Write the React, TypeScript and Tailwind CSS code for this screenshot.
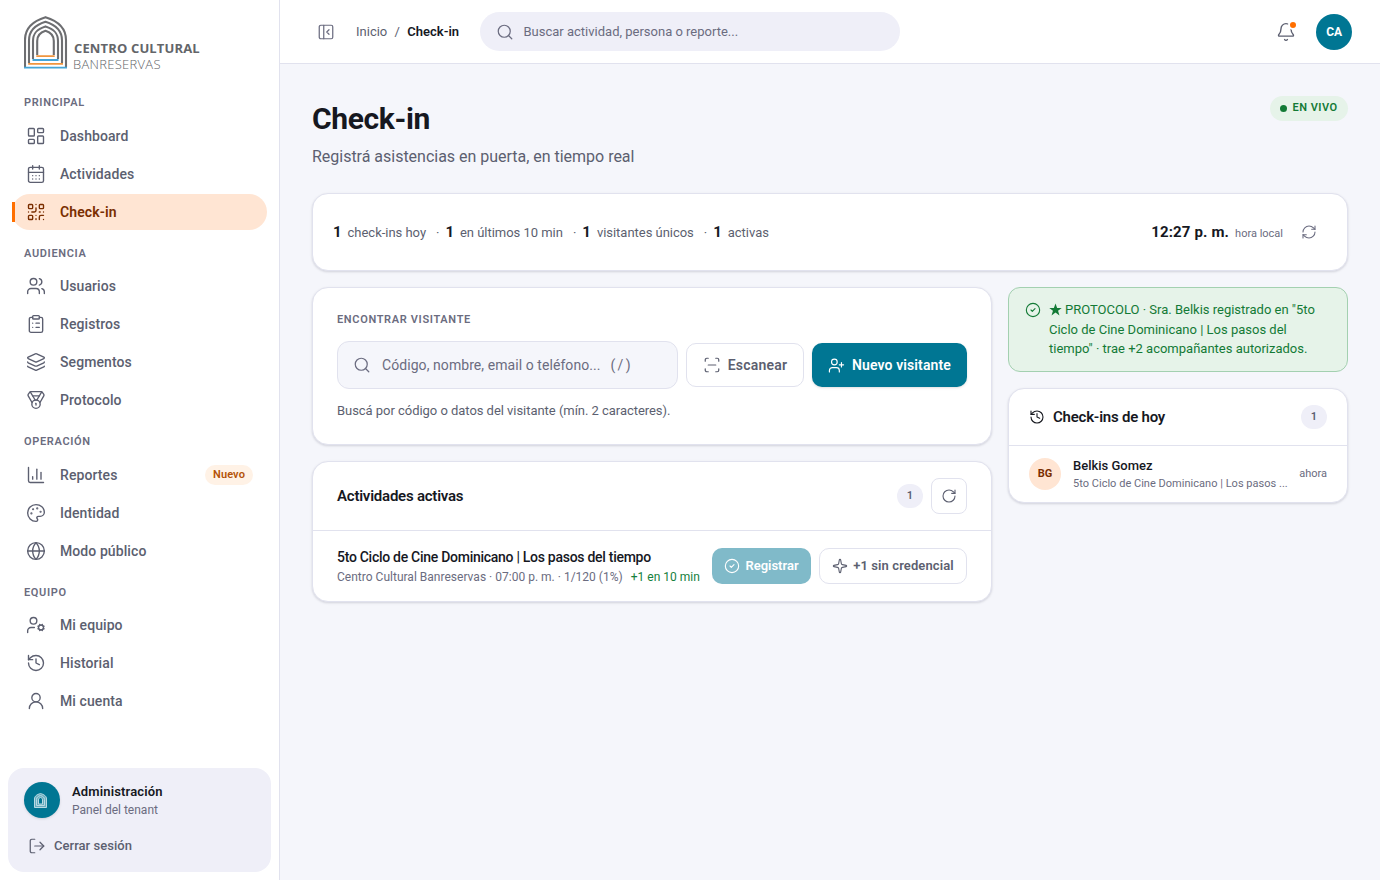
import type { ReactNode } from 'react';
import {
  Bell,
  CalendarDays,
  ChartColumn,
  CircleCheck,
  ClipboardList,
  Globe,
  History,
  Layers,
  LayoutDashboard,
  LogOut,
  Medal,
  Palette,
  PanelLeftClose,
  QrCode,
  RefreshCw,
  RotateCw,
  ScanLine,
  Search,
  Sparkle,
  UserCog,
  UserPlus,
  UserRound,
  Users,
  type LucideIcon,
} from 'lucide-react';

type NavItem = { label: string; icon: LucideIcon; active?: boolean; badge?: string };

const NAV: { title: string; items: NavItem[] }[] = [
  {
    title: 'Principal',
    items: [
      { label: 'Dashboard', icon: LayoutDashboard },
      { label: 'Actividades', icon: CalendarDays },
      { label: 'Check-in', icon: QrCode, active: true },
    ],
  },
  {
    title: 'Audiencia',
    items: [
      { label: 'Usuarios', icon: Users },
      { label: 'Registros', icon: ClipboardList },
      { label: 'Segmentos', icon: Layers },
      { label: 'Protocolo', icon: Medal },
    ],
  },
  {
    title: 'Operación',
    items: [
      { label: 'Reportes', icon: ChartColumn, badge: 'Nuevo' },
      { label: 'Identidad', icon: Palette },
      { label: 'Modo público', icon: Globe },
    ],
  },
  {
    title: 'Equipo',
    items: [
      { label: 'Mi equipo', icon: UserCog },
      { label: 'Historial', icon: History },
      { label: 'Mi cuenta', icon: UserRound },
    ],
  },
];

const STATS = ['check-ins hoy', 'en últimos 10 min', 'visitantes únicos', 'activas'];

function Logo() {
  return (
    <div className="flex h-[54px] items-start">
      <svg width="44" height="54" viewBox="0 0 44 54" fill="none" stroke="#6d6e71" strokeWidth="2.1">
        <path d="M1 51V24C1 12 9 5 21.500 1.200C34 5 42 12 42 24V51" />
        <path d="M5 47V24.500C5 14.500 11 9 21.500 5.800C32 9 38 14.500 38 24.500V47" />
        <path d="M9 43V25C9 17 13 13 21.500 10.400C30 13 34 17 34 25V43" />
        <path d="M13.200 39V25C13.200 19 16 16.500 21.500 14.800C27 16.500 29.800 19 29.800 25V39" />
        <path d="M0 51.600H43M8.500 44H34.500" stroke="#45a5d8" strokeWidth="1.8" />
        <path d="M4.200 47.800H39M12.300 40.200H30.700" stroke="#f0953f" strokeWidth="1.8" />
      </svg>
      <div className="ml-[6px] mt-[25px] font-['Open_Sans',sans-serif] text-[#636569]">
        <p className="text-[13px] leading-[15px] font-bold tracking-[0.011em] whitespace-nowrap">CENTRO CULTURAL</p>
        <p className="-ml-px text-[13px] leading-[16px] font-light tracking-[0.022em] whitespace-nowrap">BANRESERVAS</p>
      </div>
    </div>
  );
}

function NavLink({ label, icon: Icon, active, badge }: NavItem) {
  return (
    <a
      className={
        active
          ? 'relative flex h-9 items-center gap-3.5 rounded-full bg-[#ffe5d3] pl-3.5 pr-3.5 text-[#7a2e00]'
          : 'relative flex h-9 items-center gap-3.5 rounded-full pl-3.5 pr-3.5 text-[#5c5f70]'
      }
    >
      {active && <span className="absolute left-0 top-2 h-5 w-[3px] bg-[#ff6f00]" />}
      <Icon size={20} strokeWidth={1.65} />
      <span className={active ? 'text-sm font-semibold tracking-[0.008em]' : 'text-sm font-medium tracking-[0.006em]'}>
        {label}
      </span>
      {badge && (
        <span className="ml-auto flex h-5 w-12 items-center justify-center rounded-full bg-[#fff2e6] text-[11px] font-semibold tracking-[0.010em] text-[#b45309]">
          {badge}
        </span>
      )}
    </a>
  );
}

function Sidebar() {
  return (
    <aside className="flex w-[280px] shrink-0 flex-col border-r border-[#e1e2ee] bg-white">
      <div className="px-6 pt-4">
        <Logo />
      </div>
      <nav className="flex flex-col px-3 pt-[9.600px]">
        {NAV.map((group) => (
          <div key={group.title}>
            <p className="h-[38.400px] px-3 pt-[15.800px] text-[11px] leading-4 font-semibold tracking-[0.060em] text-[#6b6c80] uppercase">
              {group.title}
            </p>
            <div className="flex flex-col gap-0.5">
              {group.items.map((item) => (
                <NavLink key={item.label} {...item} />
              ))}
            </div>
          </div>
        ))}
      </nav>
      <div className="mx-2 mt-auto mb-2 h-[104px] rounded-2xl bg-[#efeff8] px-4 pt-3.5">
        <div className="flex h-9 items-center gap-3">
          <div className="flex size-9 items-center justify-center rounded-full bg-[#007693] pr-[3px] shadow-sm">
            <svg width="13" height="15" viewBox="0 0 13 15" fill="none" stroke="#b9dbe4" strokeWidth="1">
              <path d="M.5 14.500V6C.5 3 3 1.500 6.500.5C10 1.500 12.500 3 12.500 6V14.500Z" fill="#67acbe" />
              <path d="M2.500 12.500V6.500C2.500 4.300 4 3.200 6.500 2.500C9 3.200 10.500 4.300 10.500 6.500V12.500Z" />
              <path d="M4.500 11V7C4.500 5.500 5 5 6.500 4.500C8 5 8.500 5.500 8.500 7V11Z" fill="#007693" />
            </svg>
          </div>
          <div>
            <p className="text-[13px] leading-[19px] font-semibold tracking-[0.012em] text-[#16181f]">Administración</p>
            <p className="text-xs leading-[18px] text-[#6b6c80]">Panel del tenant</p>
          </div>
        </div>
        <div className="mt-[18px] flex items-center gap-2 pl-1 text-[#5c5f70]">
          <LogOut size={18} strokeWidth={1.65} />
          <span className="text-[13px] leading-5 font-medium tracking-[0.003em]">Cerrar sesión</span>
        </div>
      </div>
    </aside>
  );
}

function Topbar() {
  return (
    <header className="flex h-16 shrink-0 items-center border-b border-[#e1e2ee] bg-white pr-7 pl-[37px] text-[13px]">
      <PanelLeftClose size={18} strokeWidth={1.65} className="text-[#6b6c80]" />
      <div className="ml-[21px] flex w-[124px] items-center gap-[7.300px] text-[#5c5f70]">
        <span>Inicio</span>
        <span>/</span>
        <span className="font-semibold whitespace-nowrap text-[#16181f]">Check-in</span>
      </div>
      <div className="flex h-[39px] w-[420px] items-center gap-[9.500px] rounded-full bg-[#efeff8] px-4 text-[#6b6c80]">
        <Search size={18} strokeWidth={1.65} />
        <span>Buscar actividad, persona o reporte...</span>
      </div>
      <div className="relative mr-5 ml-auto text-[#5c5f70]">
        <Bell size={20} strokeWidth={1.65} />
        <span className="absolute -top-[2px] -right-[2px] size-[10px] rounded-full border-2 border-white bg-[#ff6f00]" />
      </div>
      <div className="flex size-9 items-center justify-center rounded-full bg-[#007693] text-xs font-bold tracking-[-0.020em] text-white">
        CA
      </div>
    </header>
  );
}

function Card({ className, children }: { className: string; children: ReactNode }) {
  return (
    <section
      className={`rounded-2xl border border-[#e1e2ee] bg-white shadow-[0_1px_3px_rgba(20,22,50,0.10),0_1px_2px_rgba(20,22,50,0.06)] ${className}`}
    >
      {children}
    </section>
  );
}

function CountPill() {
  return (
    <span className="flex h-6 w-[26px] items-center justify-center rounded-full bg-[#efeff8] text-[11px] font-semibold text-[#5c5f70]">
      1
    </span>
  );
}

function StatsBar() {
  return (
    <Card className="flex h-[78px] items-center px-5">
      <div className="flex items-baseline text-[13px] tracking-[-0.002em] text-[#5c5f70]">
        {STATS.map((stat, i) => (
          <div key={stat} className="flex items-baseline">
            {i > 0 && <span className="mr-1.5 ml-2.5">·</span>}
            <span className="mr-1.5 text-[15px] font-bold text-[#16181f]">1</span>
            <span>{stat}</span>
          </div>
        ))}
      </div>
      <div className="ml-auto flex items-baseline gap-1.5">
        <span className="text-[15px] font-bold tracking-[0.010em] text-[#16181f]">12:27 p. m.</span>
        <span className="text-[11px] text-[#6b6c80]">hora local</span>
      </div>
      <RefreshCw size={16} strokeWidth={1.6} className="mr-[10px] ml-[18px] text-[#6b6c80]" />
    </Card>
  );
}

function VisitorSearch() {
  return (
    <Card className="h-[158px] px-6 pt-6">
      <p className="text-[11px] leading-4 font-semibold tracking-[0.060em] text-[#6b6c80] uppercase">Encontrar visitante</p>
      <div className="mt-[13px] flex items-center gap-2">
        <div className="flex h-12 flex-1 items-center rounded-xl border border-[#e1e2ee] bg-[#f5f6fb] pl-[15px] text-sm text-[#6b6c80]">
          <Search size={18} strokeWidth={1.65} />
          <span className="ml-[11px] tracking-[0.005em] whitespace-pre">Código, nombre, email o teléfono...</span>
          <span className="ml-2.5 tracking-[0.160em]">(/)</span>
        </div>
        <button className="flex h-11 w-[118px] items-center justify-center gap-[7px] rounded-[10px] border border-[#e1e2ee] text-sm font-semibold tracking-[0.015em] text-[#5c5f70]">
          <ScanLine size={18} strokeWidth={1.65} />
          Escanear
        </button>
        <button className="flex h-11 w-[155px] items-center justify-center gap-[7px] rounded-[10px] bg-[#007693] text-sm font-semibold tracking-[0.008em] text-white shadow-sm">
          <UserPlus size={17} strokeWidth={1.65} />
          Nuevo visitante
        </button>
      </div>
      <p className="mt-3 text-[13px] leading-5 tracking-[-0.003em] text-[#5c5f70]">
        Buscá por código o datos del visitante (mín. 2 caracteres).
      </p>
    </Card>
  );
}

function ActiveActivities() {
  return (
    <Card className="h-[141px]">
      <div className="flex h-[69px] items-center border-b border-[#e1e2ee] px-6">
        <h2 className="text-[15px] font-semibold tracking-[-0.015em] text-[#16181f]">Actividades activas</h2>
        <div className="ml-auto flex items-center gap-2">
          <CountPill />
          <button className="flex size-9 items-center justify-center rounded-lg border border-[#e1e2ee] text-[#5c5f70]">
            <RotateCw size={16} strokeWidth={1.65} />
          </button>
        </div>
      </div>
      <div className="flex h-[70px] items-center px-6">
        <div className="whitespace-nowrap">
          <p className="text-sm leading-5 font-medium tracking-[-0.020em] text-[#16181f]">
            5to Ciclo de Cine Dominicano | Los pasos del tiempo
          </p>
          <p className="pt-px text-xs leading-[18px] tracking-[0.001em] text-[#6b6c80]">
            Centro Cultural Banreservas · 07:00 p. m. · 1/120 (1%)
            <span className="ml-2 text-[#15803d]">+1 en 10 min</span>
          </p>
        </div>
        <div className="ml-auto flex gap-2 text-[13px] font-semibold">
          <button className="flex h-9 w-[99px] items-center justify-center gap-[5px] rounded-[10px] bg-[#80bac9] text-white">
            <CircleCheck size={16} strokeWidth={1.65} />
            Registrar
          </button>
          <button className="flex h-9 w-[148px] items-center justify-center gap-[5px] rounded-[10px] border border-[#e1e2ee] tracking-[0.008em] text-[#5c5f70]">
            <Sparkle size={16} strokeWidth={1.65} />
            +1 sin credencial
          </button>
        </div>
      </div>
    </Card>
  );
}

function ProtocolNotice() {
  return (
    <div className="flex h-[85px] gap-2 rounded-xl border border-[#a3d0b0] bg-[#e6f3e9] py-3 pr-4 pl-4 text-[#137a36]">
      <CircleCheck size={16} strokeWidth={1.65} className="mt-0.5 shrink-0" />
      <p className="text-[13px] leading-[19.500px]">
        <svg width="13" height="13" viewBox="0 0 24 24" fill="currentColor" className="-mt-[3px] mr-[3px] inline">
          <path d="M12 1l3 8h8.500l-6.800 5.200L19.300 23 12 17.700 4.700 23l2.600-8.800L.5 9H9z" />
        </svg>
        PROTOCOLO · Sra. Belkis registrado en "5to Ciclo de Cine Dominicano | Los pasos del tiempo" · trae +2
        acompañantes autorizados.
      </p>
    </div>
  );
}

function TodayCheckins() {
  return (
    <Card className="h-[115px]">
      <div className="flex h-[57px] items-center border-b border-[#e1e2ee] px-5 text-[#16181f]">
        <History size={16} strokeWidth={1.65} />
        <h2 className="ml-2 text-[15px] font-semibold tracking-[-0.015em]">Check-ins de hoy</h2>
        <div className="ml-auto">
          <CountPill />
        </div>
      </div>
      <div className="flex h-14 items-center px-5">
        <div className="flex size-8 shrink-0 items-center justify-center rounded-full bg-[#ffe5d3] text-[11px] font-bold text-[#7a2e00]">
          BG
        </div>
        <div className="ml-3 min-w-0 flex-1">
          <p className="text-[13px] leading-[18px] font-medium text-[#16181f]">Belkis Gomez</p>
          <p className="text-[11px] leading-[17px] tracking-[0.002em] whitespace-nowrap text-[#6b6c80]">
            5to Ciclo de Cine Dominicano | Los pasos ...
          </p>
        </div>
        <span className="ml-3 text-[11px] text-[#6b6c80]">ahora</span>
      </div>
    </Card>
  );
}

export default function App() {
  return (
    <div className="flex h-screen overflow-hidden bg-[#f5f6fb] font-[Roboto,sans-serif]">
      <Sidebar />
      <div className="flex min-w-0 flex-1 flex-col">
        <Topbar />
        <main className="px-8 pt-8">
          <div className="flex h-[97px] items-start justify-between">
            <div>
              <h1 className="mt-[5px] text-[30px] leading-9 font-bold tracking-[-0.012em] text-[#16181f]">Check-in</h1>
              <p className="mt-2 text-base leading-6 tracking-[-0.001em] text-[#5c5f70]">
                Registrá asistencias en puerta, en tiempo real
              </p>
            </div>
            <span className="flex h-[25px] w-[78px] items-center gap-[5.500px] rounded-full bg-[#e6f3e9] pl-2.5 text-[11px] font-semibold tracking-[0.045em] text-[#137a36]">
              <span className="size-[7px] rounded-full bg-[#137a36]" />
              <span className="pb-px whitespace-nowrap">EN VIVO</span>
            </span>
          </div>
          <StatsBar />
          <div className="mt-4 grid grid-cols-[680px_340px] items-start gap-4">
            <div className="flex flex-col gap-4">
              <VisitorSearch />
              <ActiveActivities />
            </div>
            <div className="flex flex-col gap-4">
              <ProtocolNotice />
              <TodayCheckins />
            </div>
          </div>
        </main>
      </div>
    </div>
  );
}
